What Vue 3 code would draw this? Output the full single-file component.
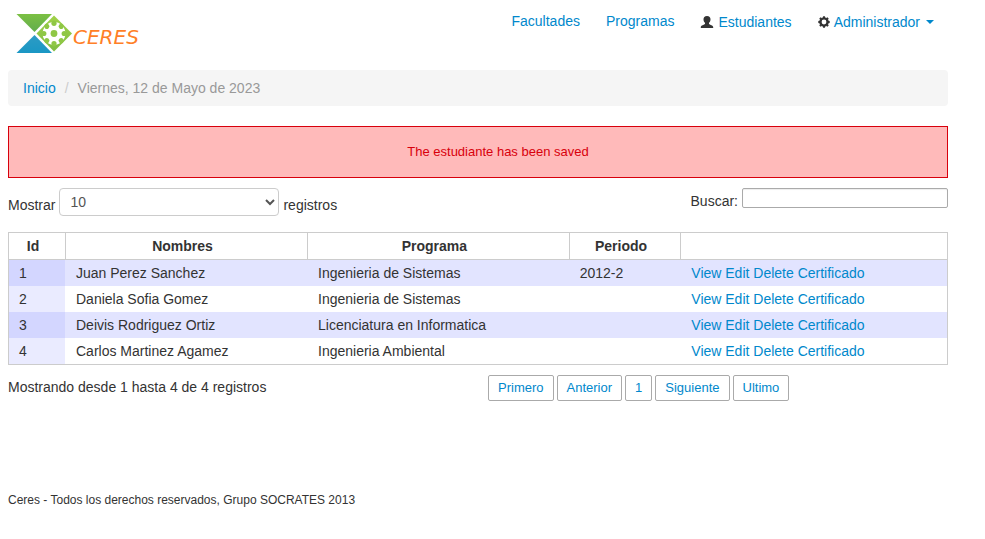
<script setup>
import { ref, computed } from 'vue'

const pageSize = ref('10')
const search = ref('')

const students = [
  { id: 1, name: 'Juan Perez Sanchez', program: 'Ingenieria de Sistemas', period: '2012-2' },
  { id: 2, name: 'Daniela Sofia Gomez', program: 'Ingenieria de Sistemas', period: '' },
  { id: 3, name: 'Deivis Rodriguez Ortiz', program: 'Licenciatura en Informatica', period: '' },
  { id: 4, name: 'Carlos Martinez Agamez', program: 'Ingenieria Ambiental', period: '' }
]

const visible = computed(() => {
  const term = search.value.toLowerCase()
  return students.filter(s => (s.name + s.program + s.period).toLowerCase().includes(term))
})

const actions = ['View', 'Edit', 'Delete', 'Certificado']
const pages = ['Primero', 'Anterior', '1', 'Siguiente', 'Ultimo']
</script>

<template>
  <div class="page">
    <header class="top">
      <a href="#" class="logo">
        <svg viewBox="0 0 150 48" width="150" height="48" role="img" aria-label="Ceres">
          <defs>
            <linearGradient id="green" x1="0" y1="0" x2="0" y2="1">
              <stop offset="0" stop-color="#7bc043" />
              <stop offset="1" stop-color="#62ad4e" />
            </linearGradient>
            <linearGradient id="blue" x1="0" y1="0" x2="0" y2="1">
              <stop offset="0" stop-color="#2d9bc4" />
              <stop offset="1" stop-color="#1a97c4" />
            </linearGradient>
            <linearGradient id="lime" x1="0" y1="0" x2="0" y2="1">
              <stop offset="0" stop-color="#a0d148" />
              <stop offset="1" stop-color="#80bd42" />
            </linearGradient>
          </defs>
          <path d="M8.500 6H44L26.500 24Z" fill="url(#green)" />
          <path d="M8.500 45H44L26.500 27Z" fill="url(#blue)" />
          <path d="M46 7.500L64 25.500L46 43.500L28.500 25.500Z" fill="url(#lime)" />
          <g transform="translate(46 25.500)" fill="#8fc745">
            <circle r="11.400" fill="#fff" />
            <circle v-for="n in 8" :key="n" cy="-10.200" r="2.600" :transform="`rotate(${n * 45})`" />
            <circle r="3.400" />
          </g>
          <text x="65" y="36" class="logo-text">CERES</text>
        </svg>
      </a>
      <nav class="nav">
        <a href="#">Facultades</a>
        <a href="#">Programas</a>
        <a href="#" class="with-icon">
          <svg class="icon" viewBox="0 0 14 12" width="14" height="12" aria-hidden="true">
            <path d="M7 0C9.400 0 10.500 1.300 10.500 3.200C10.500 4.900 9.800 6 9 6.800V8C9.800 8.900 13.200 9.200 13.200 11.300V12H.8V11.300C.8 9.200 4.200 8.900 5 8V6.800C4.200 6 3.500 4.900 3.500 3.200C3.500 1.300 4.600 0 7 0Z" fill="#333" />
          </svg>
          Estudiantes
        </a>
        <a href="#" class="with-icon">
          <svg class="icon" viewBox="0 0 12 12" width="12" height="12" aria-hidden="true">
            <g transform="translate(6 6)">
              <circle r="3.500" fill="none" stroke="#333" stroke-width="2.200" />
              <path v-for="n in 8" :key="n" d="M-1.400 -4L-.9 -5.700H.9L1.400 -4Z" fill="#333" :transform="`rotate(${n * 45})`" />
            </g>
          </svg>
          Administrador
          <i class="caret"></i>
        </a>
      </nav>
    </header>

    <ul class="breadcrumb">
      <li><a href="#">Inicio</a></li>
      <li class="divider">/</li>
      <li>Viernes, 12 de Mayo de 2023</li>
    </ul>

    <div class="alert" role="status">The estudiante has been saved</div>

    <div class="controls">
      <label class="length">
        Mostrar
        <select v-model="pageSize">
          <option>10</option>
          <option>25</option>
          <option>50</option>
          <option>100</option>
        </select>
        registros
      </label>
      <label class="filter">
        Buscar:
        <input v-model="search" type="text">
      </label>
    </div>

    <table>
      <colgroup>
        <col class="c-id"><col class="c-name"><col class="c-program"><col class="c-period"><col>
      </colgroup>
      <thead>
        <tr>
          <th>Id</th>
          <th>Nombres</th>
          <th>Programa</th>
          <th>Periodo</th>
          <th></th>
        </tr>
      </thead>
      <tbody>
        <tr v-for="s in visible" :key="s.id">
          <td>{{ s.id }}</td>
          <td>{{ s.name }}</td>
          <td>{{ s.program }}</td>
          <td>{{ s.period }}</td>
          <td><template v-for="a in actions" :key="a"><a href="#">{{ a }}</a>{{ ' ' }}</template></td>
        </tr>
      </tbody>
    </table>

    <div class="table-foot">
      <div>Mostrando desde 1 hasta 4 de 4 registros</div>
      <div class="pager">
        <button v-for="p in pages" :key="p" type="button">{{ p }}</button>
      </div>
    </div>

    <footer>Ceres - Todos los derechos reservados, Grupo SOCRATES 2013</footer>
  </div>
</template>

<style>
body {
  background: #fff;
}
</style>

<style scoped>
.page {
  box-sizing: border-box;
  max-width: 956px;
  padding: 8px;
  font: 14px/20px "Liberation Sans", Arial, sans-serif;
  color: #333;
}

a {
  color: #08c;
  text-decoration: none;
}

.top {
  display: flex;
  justify-content: space-between;
  align-items: flex-start;
  height: 62px;
}

.logo svg {
  display: block;
}

.logo-text {
  font: italic 20px "DejaVu Sans", sans-serif;
  fill: #ff7f27;
}

.nav {
  display: flex;
  align-items: flex-start;
  gap: 2px;
  padding-right: 2px;
}

.nav a {
  display: flex;
  align-items: center;
  padding: 3px 12px;
}

.nav .with-icon {
  gap: 4px;
  padding-top: 4px;
}

.caret {
  margin-left: 2px;
  border: 4px solid transparent;
  border-top-color: #08c;
  border-bottom: 0;
}

.breadcrumb {
  display: flex;
  margin: 0 0 20px;
  padding: 8px 15px;
  list-style: none;
  background: #f5f5f5;
  border-radius: 4px;
  color: #999;
}

.breadcrumb .divider {
  padding: 0 9px;
  color: #ccc;
}

.alert {
  margin-bottom: 10px;
  padding: 15px 10px 15px 50px;
  border: 1px solid #d8000c;
  background: #ffbaba;
  color: #d8000c;
  font-size: 13px;
  text-align: center;
}

.controls {
  display: flex;
  justify-content: space-between;
  align-items: flex-start;
  margin-bottom: 16px;
}

.length {
  display: flex;
  align-items: flex-end;
  gap: 4px;
  line-height: 22px;
}

.length select {
  width: 220px;
  height: 28px;
  padding: 4px 6px;
  border: 1px solid #ccc;
  border-radius: 4px;
  background: #fff;
  color: #555;
  font: inherit;
  line-height: 20px;
}

.filter {
  display: flex;
  align-items: flex-start;
  gap: 4px;
  line-height: 26px;
}

.filter input {
  box-sizing: border-box;
  width: 206px;
  height: 20px;
  padding: 0 6px;
  border: 1px solid #aaa;
  border-radius: 2px;
  background: #fff;
  box-shadow: inset 0 1px 1px rgba(0, 0, 0, 0.075);
  font: inherit;
}

table {
  width: 100%;
  table-layout: fixed;
  border: 1px solid #ccc;
  border-collapse: separate;
  border-spacing: 0;
}

.c-id {
  width: 56px;
}

.c-name {
  width: 25.8%;
}

.c-program {
  width: 27.9%;
}

.c-period {
  width: 11.9%;
}

th {
  padding: 3px 18px 3px 10px;
  border-bottom: 1px solid #ccc;
  text-align: center;
}

th + th {
  border-left: 1px solid #ccc;
}

td {
  padding: 3px 10px;
}

td + td {
  border-left: 1px solid transparent;
}

tbody tr:nth-child(odd) td {
  background: #e2e4ff;
}

tbody tr:nth-child(odd) td:first-child {
  background: #d3d6ff;
}

tbody tr:nth-child(even) td:first-child {
  background: #eaebff;
}

.table-foot {
  display: grid;
  grid-template-columns: 480px 1fr;
  padding-top: 10px;
  line-height: 24px;
}

.pager {
  display: flex;
  gap: 3px;
}

.pager button {
  height: 26px;
  padding: 0 9px;
  border: 1px solid #aaa;
  border-radius: 2px;
  background: #fff;
  color: #08c;
  font: 13px/24px "Liberation Sans", Arial, sans-serif;
  cursor: pointer;
}

footer {
  padding: 89px 0 20px;
  font-size: 12px;
}
</style>
